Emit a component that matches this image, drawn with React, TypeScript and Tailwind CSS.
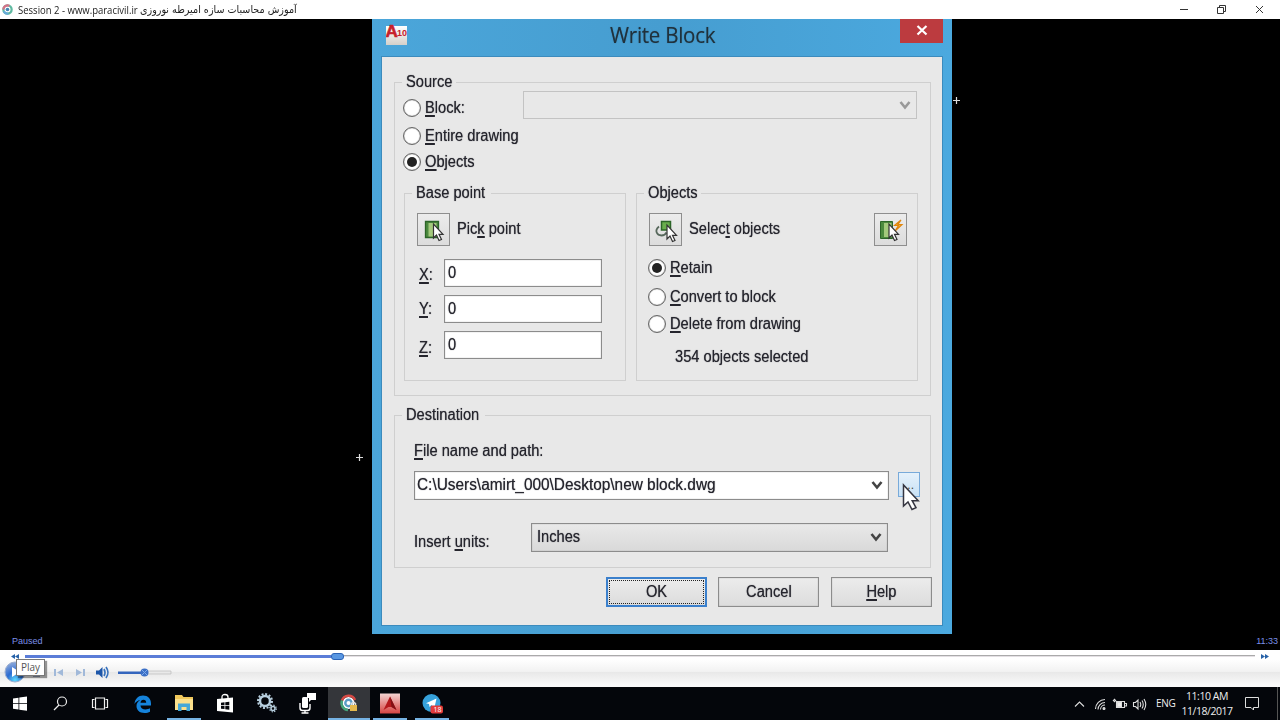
import type { ReactNode } from "react";
import clsx from "clsx";

type LabelProps = { children: ReactNode; className?: string; centered?: boolean };

// Dialog text, slightly condensed
const Label = ({ children, className, centered }: LabelProps) => (
  <span
    className={clsx(
      "inline-block scale-x-[0.915] whitespace-pre text-[16px] leading-5 text-[#25252d] [text-shadow:0_0_1px_#25252dc0]",
      centered ? "origin-center" : "origin-left",
      className
    )}
  >
    {children}
  </span>
);

const Key = ({ children }: { children: ReactNode }) => (
  <span className="underline decoration-[1.5px] underline-offset-2">{children}</span>
);

const Radio = ({ checked }: { checked?: boolean }) => (
  <span className="flex size-[18px] shrink-0 items-center justify-center rounded-full border border-[#666] bg-white shadow-[inset_0_0_1px_#444]">
    {checked && <span className="size-[10px] rounded-full bg-[#222]" />}
  </span>
);

const Chevron = ({ color = "#444" }: { color?: string }) => (
  <svg width="12" height="9" viewBox="0 0 12 9" className="shrink-0">
    <path d="M1.500 1 6 6.500 10.500 1" fill="none" stroke={color} strokeWidth="2.600" />
  </svg>
);

const Group = ({
  title,
  className,
  children,
}: {
  title: string;
  className?: string;
  children: ReactNode;
}) => (
  <fieldset className={clsx("min-w-0 border border-[#cfcfcf]", className)}>
    <legend className="ml-[7px] h-5 px-1 leading-5">
      <Label className="-mr-[5px]">{title}</Label>
    </legend>
    {children}
  </fieldset>
);

const IconButton = ({ children }: { children: ReactNode }) => (
  <button className="flex size-[33px] shrink-0 items-center justify-center border border-[#8e8e8e] bg-linear-to-b from-[#ececec] to-[#dcdcdc]">
    {children}
  </button>
);

const Arrow = () => (
  <path
    d="M12 6v14l3-3 2.500 5.500 2.500-1-2.500-5.200h4z"
    fill="#fff"
    stroke="#333"
    strokeWidth="1.200"
  />
);

const PickIcon = () => (
  <svg width="26" height="26" viewBox="0 0 26 26">
    <path d="M4.500 4.500h13v16h-13z" fill="#4c8a3e" stroke="#2c6528" strokeWidth="1.300" />
    <path d="M7.500 6h8v13.500h-8z" fill="#a3c97c" />
    <g transform="translate(.5 1)">
      <Arrow />
    </g>
  </svg>
);

const SelectIcon = () => (
  <svg width="26" height="26" viewBox="0 0 26 26">
    <path d="M6 9.500c-5 4-2 9 2.500 9 2.500 0 4-1 5-3" fill="none" stroke="#57685c" strokeWidth="1.800" />
    <path d="M8.500 4.500h9v8.500h-9z" fill="#69ae4d" stroke="#2c6528" strokeWidth="1.500" />
    <g transform="translate(2 2)">
      <Arrow />
    </g>
  </svg>
);

const QuickSelectIcon = () => (
  <svg width="26" height="26" viewBox="0 0 26 26">
    <path d="M2.500 4.500h12v17h-12z" fill="#4c8a3e" stroke="#2c6528" />
    <path d="M6 6h7.500v14H6z" fill="#a3c97c" />
    <path d="m23 3-6.500 5.500h4L17 14l7-6.500h-4z" fill="#ffd34d" stroke="#df850e" strokeWidth="1.200" />
    <g transform="translate(-1 1)">
      <Arrow />
    </g>
  </svg>
);

const axes = [
  { name: "X", className: "pt-1" },
  { name: "Y", className: "pt-[2px]" },
  { name: "Z", className: "pt-[5px]" },
];

const BasePoint = () => (
  <Group title="Base point" className="h-[198px] w-[222px]">
    <div className="flex items-center gap-[7px] pt-[10px] pl-3">
      <IconButton>
        <PickIcon />
      </IconButton>
      <Label className="-mt-px">
        Pic<Key>k</Key> point
      </Label>
    </div>
    <div className="flex flex-col gap-2 pt-[13px] pl-[14px]">
      {axes.map((axis) => (
        <div key={axis.name} className="flex h-7">
          <div className={clsx("w-[25px]", axis.className)}>
            <Label>
              <Key>{axis.name}</Key>:
            </Label>
          </div>
          <div className="flex h-7 w-[158px] items-center border border-[#8c8c8c] bg-white pl-[3px] shadow-[inset_0_0_1px_#888]">
            <Label>0</Label>
          </div>
        </div>
      ))}
    </div>
  </Group>
);

const ObjectsGroup = () => (
  <Group title="Objects" className="-ml-px h-[198px] w-[282px]">
    <div className="flex items-center pt-[10px] pr-[10px] pl-3">
      <IconButton>
        <SelectIcon />
      </IconButton>
      <Label className="-mt-px ml-[7px]">
        Selec<Key>t</Key> objects
      </Label>
      <div className="ml-auto">
        <IconButton>
          <QuickSelectIcon />
        </IconButton>
      </div>
    </div>
    <div className="flex flex-col pt-2 pl-[11px]">
      <div className="flex h-7 items-center gap-1">
        <Radio checked />
        <Label>
          <Key>R</Key>etain
        </Label>
      </div>
      <div className="flex h-[30px] items-center gap-1">
        <Radio />
        <Label>
          <Key>C</Key>onvert to block
        </Label>
      </div>
      <div className="flex h-6 items-center gap-1">
        <Radio />
        <Label>
          <Key>D</Key>elete from drawing
        </Label>
      </div>
      <Label className="mt-[11px] ml-[27px] scale-x-[0.93]">354 objects selected</Label>
    </div>
  </Group>
);

const Source = () => (
  <Group title="Source" className="h-[324px] w-[537px]">
    <div className="flex justify-between pr-[13px] pl-2">
      <div className="flex flex-col pt-[2px]">
        <div className="flex h-[27px] items-center gap-1">
          <Radio />
          <Label className="scale-x-[0.95]">
            <Key>B</Key>lock:
          </Label>
        </div>
        <div className="flex h-[29px] items-center gap-1">
          <Radio />
          <Label>
            <Key>E</Key>ntire drawing
          </Label>
        </div>
        <div className="flex h-6 items-center gap-1">
          <Radio checked />
          <Label>
            <Key>O</Key>bjects
          </Label>
        </div>
      </div>
      <div className="-mt-px -ml-2 flex h-7 w-[394px] shrink-0 items-center justify-end border border-[#c3c3c3] pr-[5px]">
        <Chevron color="#999" />
      </div>
    </div>
    <div className="flex gap-[11px] pt-[9px] pl-[9px]">
      <BasePoint />
      <ObjectsGroup />
    </div>
  </Group>
);

const Destination = () => (
  <Group title="Destination" className="mt-[9px] h-[163px] w-[537px]">
    <div className="pl-[19px]">
      <div className="flex pt-4">
        <Label>
          <Key>F</Key>ile name and path:
        </Label>
      </div>
      <div className="flex items-center gap-[9px] pt-[10px]">
        <div className="flex h-[29px] w-[475px] items-center justify-between border border-[#8c8c8c] bg-white pr-[5px] pl-[2px] shadow-[inset_0_0_1px_#888]">
          <Label className="scale-x-[0.962] pb-[2px]">
            {"C:\\Users\\amirt_000\\Desktop\\new block.dwg"}
          </Label>
          <Chevron />
        </div>
        <button className="relative -mt-[2px] h-[25px] w-[22px] border border-[#78aada] bg-linear-to-b from-[#e5f1fb] to-[#c9e1f5] text-xs text-[#444]">
          ...
          <svg className="absolute top-[10px] left-[3px] z-10" width="18" height="28" viewBox="0 0 18 28">
            <path
              d="M1.500 2v21l4.500-4 4 7.500 4-1.800-3.800-7h6z"
              fill="#fff"
              stroke="#353540"
              strokeWidth="1.500"
            />
          </svg>
        </button>
      </div>
      <div className="flex items-center pt-5">
        <div className="w-[117px] pt-[10px]">
          <Label className="scale-x-[0.905]">
            Insert <Key>u</Key>nits:
          </Label>
        </div>
        <div className="flex h-[29px] w-[357px] items-center justify-between border border-[#8c8c8c] bg-linear-to-b from-[#e9e9e9] to-[#d9d9d9] pr-[5px] pl-[5px] shadow-[inset_0_0_1px_#888]">
          <Label>Inches</Label>
          <Chevron />
        </div>
      </div>
    </div>
  </Group>
);

const WriteBlockDialog = () => (
  <div className="ml-[372px] h-[615px] w-[580px] bg-linear-to-r from-[#4ba6da] via-[#469dd0] to-[#4ba9df] font-['Liberation_Sans',Arial,sans-serif]">
    <div className="flex h-[38px] items-start justify-between pr-[9px] pl-[14px]">
      <svg width="22" height="28" viewBox="0 0 22 28">
        <defs>
          <linearGradient id="paper" x2="0" y2="1">
            <stop stopColor="#fff" />
            <stop offset="1" stopColor="#d5d0ca" />
          </linearGradient>
        </defs>
        <path d="M0 7h21v19H0z" fill="url(#paper)" />
        <text x="-.5" y="17.500" fontSize="17" fontWeight="bold" fill="#c7202b" stroke="#c7202b" strokeWidth=".6">
          A
        </text>
        <text x="11" y="17" fontSize="9" fontWeight="bold" fill="#c7202b">
          10
        </text>
      </svg>
      <h1 className="ml-[17px] origin-center scale-x-[0.98] font-['Open_Sans','Noto_Sans',sans-serif] text-[21px] leading-[33px] tracking-[-0.3px] text-[#20313c] [text-shadow:0_0_1px_#20313c80]">
        Write Block
      </h1>
      <button className="flex h-6 w-[43px] items-center justify-center bg-[#bc3b3f]">
        <svg width="12" height="12" viewBox="0 0 12 12">
          <path d="m1.500 1 9 8.500m0-8.500-9 8.500" stroke="#fff" strokeWidth="2.200" />
        </svg>
      </button>
    </div>
    <div className="mx-[10px] h-[568px] bg-[#e8e8e8] pt-[15px] pl-3 shadow-[0_0_0_1px_#3c8bbd]">
      <Source />
      <Destination />
      <div className="flex gap-[11px] pt-[9px] pl-[212px]">
        <button className="flex h-[30px] w-[101px] border-2 border-[#3b80cc] bg-linear-to-b from-[#ececec] to-[#dcdcdc] p-px">
          <span className="flex size-full items-center justify-center border border-dotted border-[#222]">
            <Label centered>OK</Label>
          </span>
        </button>
        <button className="h-[30px] w-[101px] border border-[#8c8c8c] bg-linear-to-b from-[#ececec] to-[#dcdcdc] shadow-[inset_0_0_1px_#888]">
          <Label centered>Cancel</Label>
        </button>
        <button className="ml-px h-[30px] w-[101px] border border-[#8c8c8c] bg-linear-to-b from-[#ececec] to-[#dcdcdc] shadow-[inset_0_0_1px_#888]">
          <Label centered>
            <Key>H</Key>elp
          </Label>
        </button>
      </div>
    </div>
  </div>
);

const Cross = ({ className }: { className: string }) => (
  <svg className={clsx("absolute", className)} width="7" height="7" viewBox="0 0 7 7">
    <path d="M3.500 0v7M0 3.500h7" stroke="#ddd" strokeWidth="1.200" />
  </svg>
);

const TitleBar = () => (
  <header className="flex h-[19px] items-center justify-between bg-white">
    <div className="flex items-center pl-[2px]">
      <svg width="11" height="11" viewBox="0 0 12 12">
        <circle cx="6" cy="6" r="4.500" fill="none" stroke="#5fb9a1" strokeWidth="2.500" />
        <path d="M1.500 6A4.500 4.500 0 0 1 8 2" fill="none" stroke="#d87087" strokeWidth="2.500" />
        <path d="M2 8a4.500 4.500 0 0 0 5 2.400" fill="none" stroke="#67aadb" strokeWidth="2.500" />
        <circle cx="6" cy="6" r="2" fill="#4285b5" />
      </svg>
      <span className="ml-[5px] inline-block w-[119px] origin-left scale-x-[0.865] font-['Open_Sans','Noto_Sans',sans-serif] text-[11px] leading-[19px] whitespace-nowrap text-[#222]">
        Session 2 - www.paracivil.ir
      </span>
      <span
        dir="rtl"
        className="ml-[3px] inline-block origin-left scale-x-[0.913] font-['DejaVu_Sans',sans-serif] text-[10.5px] leading-[19px] whitespace-nowrap text-[#222]"
      >
        آموزش محاسبات سازه امیرطه نوروزی
      </span>
    </div>
    <svg width="86" height="11" viewBox="0 0 86 11" fill="none" stroke="#333" className="mr-[15px]">
      <path d="M1 5.500h8" />
      <path d="M38.500 3.500h6v6h-6zM40.500 3.500v-2h6v6h-2" />
      <path d="m77 2 7 7m0-7-7 7" />
    </svg>
  </header>
);

const Player = () => (
  <div className="relative h-[37px] bg-[linear-gradient(#fff_0,#fff_25%,#f2f2f2_58%,#e8e8e8_60%,#fafafa_95%)] pt-[2px]">
    <div className="flex h-[8px] items-center gap-[6px] px-[11px]">
      <svg width="8" height="5" viewBox="0 0 8 5" fill="#2762a8">
        <path d="M4 0v5L0 2.500zM8 0v5L4 2.500z" />
      </svg>
      <div className="flex h-3 flex-1 items-center">
        <div className="h-[3px] w-[306px] bg-[#5b7dd8]" />
        <div className="h-[7px] w-[13px] rounded-[3px] border border-[#2b62b5] bg-[#5997e2]" />
        <div className="h-[2px] flex-1 border-t border-[#aaa] bg-[#e4e0e4]" />
      </div>
      <svg width="8" height="5" viewBox="0 0 8 5" fill="#2762a8">
        <path d="M0 0v5l4-2.500zM4 0v5l4-2.500z" />
      </svg>
    </div>
    <div className="flex h-[25px] items-center pl-[4px]">
      <svg width="176" height="23" viewBox="0 0 176 23">
        <defs>
          <radialGradient id="orb" cx=".5" cy=".9" r=".8">
            <stop stopColor="#5bdcff" />
            <stop offset=".5" stopColor="#2c6bd1" />
            <stop offset="1" stopColor="#7e9fd8" />
          </radialGradient>
        </defs>
        <circle cx="11" cy="11" r="10" fill="url(#orb)" stroke="#9eb0d0" />
        <path d="M8 6v10l8-5z" fill="#fff" />
        <path d="M29 13h7v2.500h-7z" fill="#3f5685" />
        <g fill="#a1b9d9">
          <path d="M50 8h2v7h-2zM59 8v7l-6-3.500zM72 8v7l6-3.500zM79 8h2v7h-2z" />
        </g>
        <path d="M92 9.500h3l3.500-3.500v11l-3.500-3.500h-3z" fill="#1e57a9" />
        <path d="M100 8q2 3.500 0 7m2-9q4 5.500 0 11" fill="none" stroke="#3872bd" strokeWidth="1.700" />
        <path d="M140 10h27v3h-27z" fill="#e9e9e9" stroke="#bbb" strokeWidth=".7" />
        <path d="M114 10.500h27v2.500h-27z" fill="#3365bd" />
        <circle cx="140.500" cy="11.500" r="4" fill="#3b6fc6" />
        <path d="m138 9 5 5m0-5-5 5" stroke="#7daaea" />
      </svg>
    </div>
    <div className="absolute top-[9px] left-[16px] flex h-[17px] w-[29px] items-center justify-center border border-[#777] bg-white font-['Open_Sans','Noto_Sans',sans-serif] text-[10px] text-[#555] shadow-[2px_2px_1px_#0006]">
      Play
    </div>
  </div>
);

const apps = [
  {
    name: "edge",
    cell: "",
    bar: "",
    icon: (
      <path
        d="M1.500 10C2 4.500 5.500 1.500 10 1.500c5 0 8 3.500 8 8v2H7.500c0 2.600 2.300 4 5 4 1.800 0 3.300-.5 4.500-1.200v3.400c-1.500.8-3.200 1.300-5.500 1.300-5 0-8-2.800-8-7 0-2.700 1.500-4.800 4-6C4.500 6.500 2.700 8 1.500 10zm6-1.300h5.700c0-1.800-.9-3-2.700-3s-2.800 1.200-3 3z"
        fill="#1583dc"
      />
    ),
  },
  {
    name: "explorer",
    cell: "",
    bar: "w-[34px]",
    icon: (
      <>
        <path d="M1 1h7l1.500 2H19v13H1z" fill="#f0c85c" />
        <path d="M1 5h18v11H1z" fill="#fbe08c" />
        <path d="M4 9.500h12V17h-3.500v-4h-5v4H4z" fill="#45a8d8" />
      </>
    ),
  },
  {
    name: "store",
    cell: "",
    bar: "",
    icon: (
      <>
        <path d="M7 5V3q0-2.500 3-2.500T13 3v2" fill="none" stroke="#fff" strokeWidth="1.300" />
        <path d="m2 5 16-1.500V18.500L2 17z" fill="#fff" />
        <path d="m6 8.700 3.500-.4v3H6zM10.300 8.200l4-.5v3.600h-4zM6 12.100h3.500V15L6 14.700zM10.300 12.100h4v3.600l-4-.5z" fill="#05070c" />
      </>
    ),
  },
  {
    name: "settings",
    cell: "",
    bar: "",
    icon: (
      <g fill="none" stroke="#b8cfdf">
        <circle cx="8" cy="7" r="5" strokeWidth="2.500" />
        <circle cx="8" cy="7" r="7" strokeWidth="2" strokeDasharray="2 1.660" />
        <circle cx="16" cy="14.500" r="2" strokeWidth="1.500" />
        <circle cx="16" cy="14.500" r="3.300" strokeWidth="1.300" strokeDasharray="1.300 1.290" />
      </g>
    ),
  },
  {
    name: "recorder",
    cell: "",
    bar: "",
    icon: (
      <>
        <rect x="4" y="3" width="6" height="11" rx="1.500" fill="#fff" />
        <path d="M2 9v5q0 2.500 2.500 2.500h5Q12 16.500 12 14V10M7 16.500V19M3.500 19h7" fill="none" stroke="#fff" strokeWidth="1.400" />
        <path d="M9 -1h9v7h-5l-2 2V4H9z" fill="#fff" />
      </>
    ),
  },
  {
    name: "player",
    cell: "bg-[#34363a]",
    bar: "w-full",
    icon: (
      <>
        <circle cx="9.500" cy="9" r="6" fill="#fff" />
        <path d="M3 6.500A7 7 0 0 1 16 6" fill="none" stroke="#d64a45" strokeWidth="2.500" />
        <path d="M3 6.500A7 7 0 0 0 9 16" fill="none" stroke="#45a47b" strokeWidth="2.500" />
        <circle cx="9.500" cy="9" r="3.200" fill="none" stroke="#5a9cc5" strokeWidth="2.400" />
        <path d="M12.500 11V9.500q2-2 4 0V11" fill="none" stroke="#ddd" strokeWidth="1.500" />
        <path d="M11 11h7v6h-7z" fill="#e5b84c" />
      </>
    ),
  },
  {
    name: "autocad",
    cell: "",
    bar: "w-[34px]",
    icon: (
      <>
        <defs>
          <linearGradient id="acad" x2="0" y2="1">
            <stop stopColor="#f4d4d2" />
            <stop offset="1" stopColor="#d64340" />
          </linearGradient>
        </defs>
        <path d="M0 -.5h20v20H0z" fill="url(#acad)" />
        <path d="m10 2.500 6.500 13.500-5-3h-3l-5 3z" fill="#b5191c" />
        <path d="m10 2.500 1.500 10.500 5 3z" fill="#821014" />
      </>
    ),
  },
  {
    name: "telegram",
    cell: "",
    bar: "w-[34px]",
    icon: (
      <>
        <circle cx="9.500" cy="9" r="9" fill="#36a1db" />
        <path d="M4 9.200 14.500 4.500l-2 9-3.200-2.500L7.500 13l-.5-3z" fill="#fff" />
        <rect x="8.500" y="11.500" width="12.500" height="8" rx="2" fill="#e33b3b" />
        <text x="11.500" y="18.300" fontSize="7" fill="#fff" fontFamily="Open Sans, sans-serif">
          18
        </text>
      </>
    ),
  },
];

const Taskbar = () => (
  <footer className="flex h-[33px] justify-between bg-[#04060b] font-['Open_Sans','Noto_Sans',sans-serif] text-[11px] text-[#eee]">
    <div className="flex">
      <div className="flex w-[122px] items-center">
        <svg width="122" height="20" viewBox="0 0 122 20" fill="none" stroke="#eee" strokeWidth="1.200">
          <path d="m13 4.500 5.500-.8v5.300H13zM19.300 3.600l7.700-1.100V9h-7.700zM13 9.800h5.500v5.700L13 14.700zM19.300 9.800h7.700v6.900l-7.700-1z" fill="#fff" stroke="none" />
          <circle cx="62" cy="7.500" r="4.500" />
          <path d="m59 11-5 5" />
          <path d="M95.500 4h9v11h-9zM94.500 5.500h-2v8h2M105.500 5.500h2v8h-2" />
        </svg>
      </div>
      {apps.map((app) => (
        <div
          key={app.name}
          className={clsx("flex w-[41.300px] flex-col items-center justify-between", app.cell)}
        >
          <svg width="20" height="20" viewBox="0 0 20 20" className="mt-[7px] overflow-visible">
            {app.icon}
          </svg>
          <div className={clsx("h-[2px] bg-[#76b3e4]", app.bar)} />
        </div>
      ))}
    </div>
    <div className="flex items-center">
      <svg width="73" height="16" viewBox="0 0 73 16" fill="none" stroke="#ddd" strokeWidth="1.100">
        <path d="m1 10.500 4.500-4.500 4.500 4.500" />
        <path d="M21.500 13A9.500 9.500 0 0 1 31 3.500M24 13.500A7 7 0 0 1 31 6.500M26.500 13.500A4.500 4.500 0 0 1 31 9" />
        <circle cx="30" cy="12.500" r="1" fill="#ddd" />
        <path d="M42.500 5.500h8v6h-8zM51 7.500h1.500v2.500H51M39 4l2 2m-1-3 2 2" />
        <path d="M43.500 6.500h4v4h-4z" fill="#eee" />
        <path d="M59.500 6.500h2l2.500-2.500v9l-2.500-2.500h-2zM66 6q1.500 2.500 0 5m2-6.500q2.500 4 0 8m2-9.500q3.500 5.500 0 11" />
      </svg>
      <span className="ml-[9px] w-[18px] text-[10px] tracking-[-0.300px]">ENG</span>
      <div className="ml-[7px] w-[52px] text-center text-[10.500px] leading-[15px] tracking-[-0.450px] whitespace-nowrap">
        <div>11:10 AM</div>
        <div>11/18/2017</div>
      </div>
      <svg width="16" height="15" viewBox="0 0 16 15" fill="none" stroke="#ddd" className="mr-[17px] ml-[11px]">
        <path d="M1.500 1.500h13v10h-5V14L7 11.500H1.500z" />
      </svg>
      <div className="mr-[2px] h-full w-px bg-[#555]" />
    </div>
  </footer>
);

const App = () => (
  <div className="flex h-[720px] w-[1280px] flex-col overflow-hidden bg-black">
    <TitleBar />
    <main className="relative flex h-[631px] flex-col bg-black">
      <WriteBlockDialog />
      <Cross className="top-[78px] left-[953px]" />
      <Cross className="top-[435px] left-[356px]" />
      <div className="flex h-4 items-center justify-between pr-[2px] pl-3 font-['Liberation_Sans',Arial,sans-serif] text-[9px] text-[#7b8fe8]">
        <span>Paused</span>
        <span>11:33</span>
      </div>
    </main>
    <Player />
    <Taskbar />
  </div>
);

export default App;
